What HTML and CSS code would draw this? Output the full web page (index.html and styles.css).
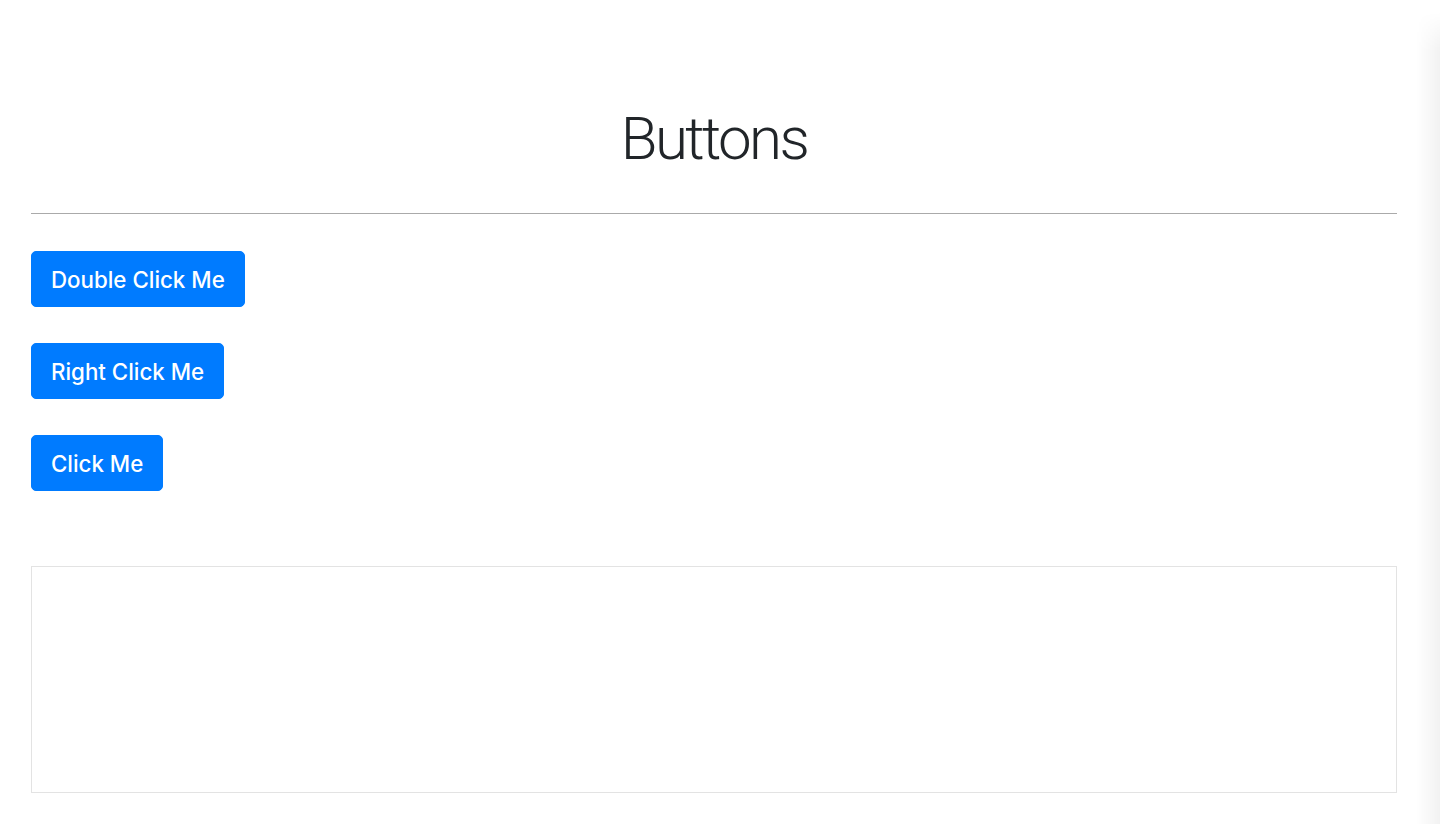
FILE: index.html
```html
<!DOCTYPE html>
<html>
<head>
<meta charset="utf-8">
<link rel="stylesheet" href="styles.css">
</head>
<body>
<div class="page">
  <h1 class="title">Buttons</h1>
  <hr class="rule">
  <div class="buttons">
    <button class="btn">Double Click Me</button>
    <button class="btn">Right Click Me</button>
    <button class="btn">Click Me</button>
  </div>
  <div class="output"></div>
</div>
<div class="edge-shadow"></div>
</body>
</html>
```

FILE: styles.css
```css
html, body {
  margin: 0;
  padding: 0;
  background: #fff;
}
body {
  font-family: Inter, "Noto Sans", sans-serif;
  color: #212529;
}
.page {
  padding: 0 43px 0 31px;
}
.title {
  margin: 0;
  padding-top: 103px;
  text-align: center;
  font-family: Roboto, "Liberation Sans", sans-serif;
  font-weight: 300;
  font-size: 60px;
  line-height: 72px;
  letter-spacing: -2.6px;
}
.rule {
  border: 0;
  border-top: 1px solid #aaa;
  margin: 38px 0 0;
}
.buttons {
  display: flex;
  flex-direction: column;
  align-items: flex-start;
  gap: 36px;
  padding-top: 37px;
}
.btn {
  height: 56px;
  padding: 1px 19px 0;
  border: 1px solid #007bff;
  border-radius: 5px;
  background: #007bff;
  color: #fff;
  font-family: Inter, "Noto Sans", sans-serif;
  font-size: 22.3px;
  font-weight: 500;
  line-height: 53px;
}
.output {
  margin-top: 75px;
  height: 227px;
  box-sizing: border-box;
  border: 1px solid #e3e3e3;
}
.edge-shadow {
  position: fixed;
  top: 12px;
  right: 0;
  width: 24px;
  bottom: 0;
  background: linear-gradient(to right, rgba(0,0,0,0), rgba(0,0,0,0.05));
  -webkit-mask-image: linear-gradient(to bottom, transparent, #000 40px);
  mask-image: linear-gradient(to bottom, transparent, #000 40px);
  pointer-events: none;
}
```
